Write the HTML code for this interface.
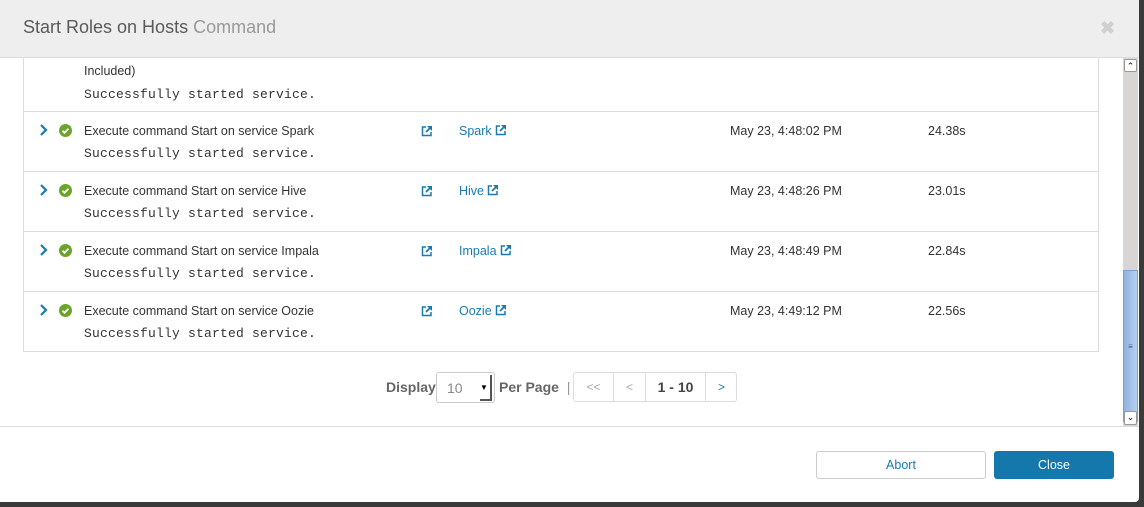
<!DOCTYPE html>
<html><head><style>
*{margin:0;padding:0;box-sizing:border-box}
body{width:1144px;height:507px;overflow:hidden;background:#3a3a3a;font-family:"Liberation Sans",sans-serif;position:relative}
.m{position:absolute;left:0;top:0;width:1139px;height:502px;background:#fff;border-radius:0 0 4px 0;overflow:hidden}
.hd{position:absolute;left:0;top:0;width:1139px;height:58px;background:#efeeee;border-bottom:1px solid #ddd;z-index:5}
.hd .t{position:absolute;left:23px;top:17px;font-size:18px;color:#5a5a5a}
.hd .t span{color:#999}
.x{position:absolute;left:1100px;top:18px;font-size:18px;color:#d0d0d0;font-weight:bold}
.tbl{position:absolute;left:23px;top:40px;width:1076px;height:312px;border:1px solid #ddd}
.row{position:absolute;left:0;width:1074px;border-top:1px solid #ddd;height:60px}
.s{position:absolute;font-size:12.5px;color:#333}
.mono{font-family:"Liberation Mono",monospace;font-size:13px;letter-spacing:0.2px;color:#333;position:absolute;left:60px}
.b{color:#1a7ab0}
.sb{position:absolute;left:1123px;top:58px;width:15px;height:368px;background:#d8d6d4}
.ft{position:absolute;left:0;top:426px;width:1139px;border-top:1px solid #ddd}
.btn{position:absolute;top:451px;height:28px;border-radius:3px;font-size:12.5px;text-align:center;line-height:26px}
</style></head><body>
<div class="m">
<div class="hd"><div class="t">Start Roles on Hosts <span>Command</span></div><div class="x">✖</div></div>
<div class="tbl">
 <div class="s" style="left:60px;top:23px">Included)</div>
 <div class="mono" style="top:46px">Successfully started service.</div>
 <div class="row" style="top:70px"></div>
 <div class="row" style="top:130px"></div>
 <div class="row" style="top:190px"></div>
 <div class="row" style="top:250px"></div>
</div>
<div id="rows"></div>
<div class="sb">
 <div style="position:absolute;left:1px;top:1px;width:13px;height:13px;background:#fff;border:1px solid #999;border-radius:2px;font-size:9px;text-align:center;line-height:12px">⌃</div>
 <div style="position:absolute;left:0;top:212px;width:15px;height:152px;background:linear-gradient(90deg,#8fb2e0,#b6cff0);border:1px solid #7aa0d0;color:#557;font-size:8px;text-align:center;line-height:152px">≡</div>
 <div style="position:absolute;left:1px;top:353px;width:13px;height:14px;background:#fff;border:1px solid #999;border-radius:2px;font-size:9px;text-align:center;line-height:10px">⌄</div>
</div>
<div style="position:absolute;left:386px;top:379px;font-size:14px;font-weight:bold;color:#666">Display</div>
<div style="position:absolute;left:436px;top:372px;width:59px;height:31px;border:1px solid #ccc;border-radius:3px;font-size:14px;color:#888;padding:7px 0 0 10px">10<span style="position:absolute;right:2px;top:2px;width:12px;height:26px;border-right:2px solid #555;border-bottom:2px solid #555;font-size:8px;color:#000;padding-top:8px">▼</span></div>
<div style="position:absolute;left:499px;top:379px;font-size:14px;font-weight:bold;color:#666">Per Page <span style="font-weight:normal;color:#999">&nbsp;|</span></div>
<div style="position:absolute;left:573px;top:372px;width:164px;height:30px;border:1px solid #ddd;border-radius:3px;font-size:12px;color:#aaa">
 <span style="position:absolute;left:0;width:39px;text-align:center;top:7px">&lt;&lt;</span>
 <span style="position:absolute;left:39px;top:0;height:28px;border-left:1px solid #ddd;width:32px;text-align:center;padding-top:7px">&lt;</span>
 <span style="position:absolute;left:71px;top:0;height:28px;border-left:1px solid #ddd;width:60px;text-align:center;padding-top:6px;font-size:14px;font-weight:bold;color:#444">1 - 10</span>
 <span style="position:absolute;left:131px;top:0;height:28px;border-left:1px solid #ddd;width:32px;text-align:center;padding-top:7px;color:#1a7ab0">&gt;</span>
</div>
<div class="ft"></div>
<div class="btn" style="left:816px;width:170px;border:1px solid #ccc;color:#1a7ab0;background:#fff">Abort</div>
<div class="btn" style="left:994px;width:120px;background:#1478ad;color:#fff;line-height:28px">Close</div>
</div>
<script>
var d=[["Spark","May 23, 4:48:02 PM","24.38s"],["Hive","May 23, 4:48:26 PM","23.01s"],["Impala","May 23, 4:48:49 PM","22.84s"],["Oozie","May 23, 4:49:12 PM","22.56s"]];
var ext='<svg width="12" height="12" viewBox="0 0 12 12" style="vertical-align:-1px"><path d="M5 2H1.5v8.5H10V7" fill="none" stroke="#1a7ab0" stroke-width="1.5"/><path d="M6 1h5v5z" fill="#1a7ab0"/><path d="M10 2L5 7" stroke="#1a7ab0" stroke-width="1.8"/></svg>';
var h='';
d.forEach(function(r,i){var y=111+i*60;
h+='<div style="position:absolute;left:0;top:'+y+'px;width:1100px;height:60px">'+
'<svg style="position:absolute;left:39px;top:13px" width="9" height="12" viewBox="0 0 9 12"><path d="M2 1l5 5-5 5" fill="none" stroke="#1a7ab0" stroke-width="2.2"/></svg>'+
'<svg style="position:absolute;left:59px;top:13px" width="13" height="13" viewBox="0 0 13 13"><circle cx="6.5" cy="6.5" r="6.5" fill="#6aa42a"/><path d="M3.5 6.8l2 2 4-4" fill="none" stroke="#fff" stroke-width="1.8"/></svg>'+
'<div class="s" style="left:84px;top:13px">Execute command Start on service '+r[0]+'</div>'+
'<div class="mono" style="left:84px;top:35px">Successfully started service.</div>'+
'<div style="position:absolute;left:421px;top:12px">'+ext+'</div>'+
'<div class="s b" style="left:459px;top:13px">'+r[0]+' '+ext+'</div>'+
'<div class="s" style="left:730px;top:13px">'+r[1]+'</div>'+
'<div class="s" style="left:928px;top:13px">'+r[2]+'</div></div>';});
document.getElementById('rows').innerHTML=h;
</script>
</body></html>
